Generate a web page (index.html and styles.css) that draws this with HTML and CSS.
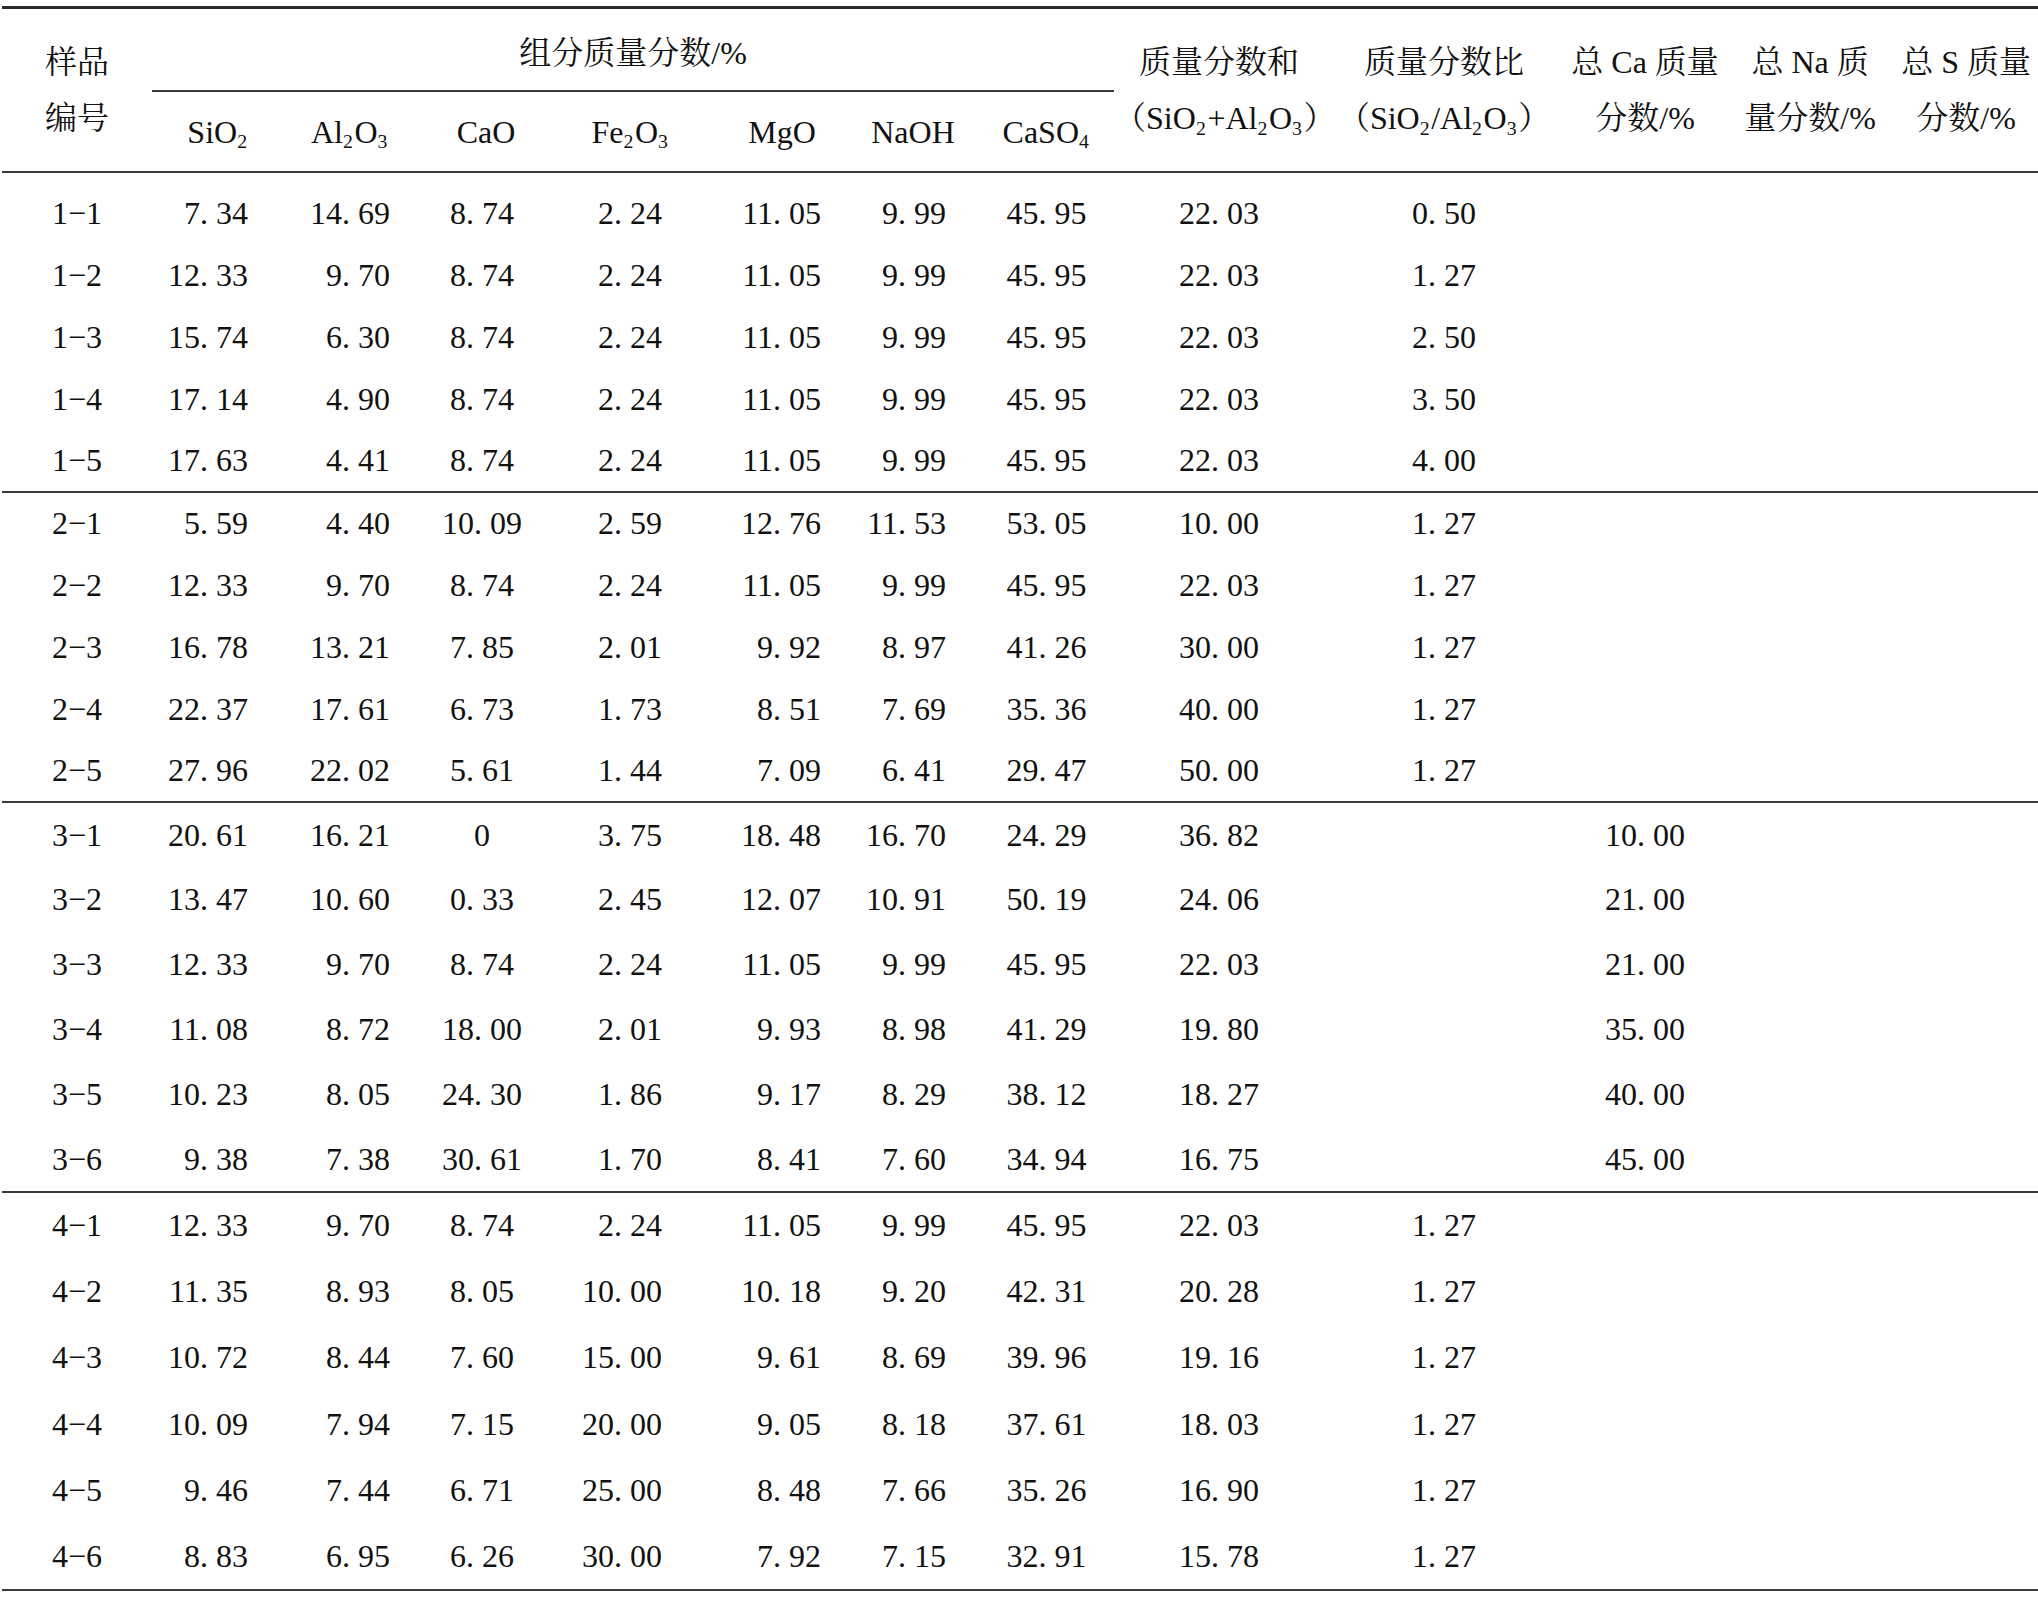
FILE: index.html
```html
<!DOCTYPE html>
<html lang="zh-CN">
<head>
<meta charset="utf-8">
<title>样品组分质量分数</title>
<link rel="stylesheet" href="styles.css">
</head>
<body>
<table class="data">
  <colgroup>
    <col class="c-id"><col class="c-si"><col class="c-al"><col class="c-ca"><col class="c-fe"><col class="c-mg"><col class="c-na"><col class="c-cs"><col class="c-sum"><col class="c-ratio"><col class="c-tca"><col class="c-tna"><col class="c-ts">
  </colgroup>
  <thead>
    <tr class="h1">
      <th rowspan="2" class="two">样品<br>编号</th>
      <th colspan="7" class="group">组分质量分数/%</th>
      <th rowspan="2" class="two">质量分数和<br>（SiO<sub>2</sub>+Al<sub>2</sub>O<sub>3</sub>）</th>
      <th rowspan="2" class="two">质量分数比<br>（SiO<sub>2</sub>/Al<sub>2</sub>O<sub>3</sub>）</th>
      <th rowspan="2" class="two">总 Ca 质量<br>分数/%</th>
      <th rowspan="2" class="two">总 Na 质<br>量分数/%</th>
      <th rowspan="2" class="two">总 S 质量<br>分数/%</th>
    </tr>
    <tr class="h2">
      <th>SiO<sub>2</sub></th>
      <th>Al<sub>2</sub>O<sub>3</sub></th>
      <th>CaO</th>
      <th>Fe<sub>2</sub>O<sub>3</sub></th>
      <th class="mg">MgO</th>
      <th>NaOH</th>
      <th>CaSO<sub>4</sub></th>
    </tr>
  </thead>
  <tbody class="g1">
    <tr><td>1−1</td><td>7. 34</td><td>14. 69</td><td>8. 74</td><td>2. 24</td><td>11. 05</td><td>9. 99</td><td>45. 95</td><td>22. 03</td><td>0. 50</td><td></td><td></td><td></td></tr>
    <tr><td>1−2</td><td>12. 33</td><td>9. 70</td><td>8. 74</td><td>2. 24</td><td>11. 05</td><td>9. 99</td><td>45. 95</td><td>22. 03</td><td>1. 27</td><td></td><td></td><td></td></tr>
    <tr><td>1−3</td><td>15. 74</td><td>6. 30</td><td>8. 74</td><td>2. 24</td><td>11. 05</td><td>9. 99</td><td>45. 95</td><td>22. 03</td><td>2. 50</td><td></td><td></td><td></td></tr>
    <tr><td>1−4</td><td>17. 14</td><td>4. 90</td><td>8. 74</td><td>2. 24</td><td>11. 05</td><td>9. 99</td><td>45. 95</td><td>22. 03</td><td>3. 50</td><td></td><td></td><td></td></tr>
    <tr><td>1−5</td><td>17. 63</td><td>4. 41</td><td>8. 74</td><td>2. 24</td><td>11. 05</td><td>9. 99</td><td>45. 95</td><td>22. 03</td><td>4. 00</td><td></td><td></td><td></td></tr>
  </tbody>
  <tbody class="g2">
    <tr><td>2−1</td><td>5. 59</td><td>4. 40</td><td>10. 09</td><td>2. 59</td><td>12. 76</td><td>11. 53</td><td>53. 05</td><td>10. 00</td><td>1. 27</td><td></td><td></td><td></td></tr>
    <tr><td>2−2</td><td>12. 33</td><td>9. 70</td><td>8. 74</td><td>2. 24</td><td>11. 05</td><td>9. 99</td><td>45. 95</td><td>22. 03</td><td>1. 27</td><td></td><td></td><td></td></tr>
    <tr><td>2−3</td><td>16. 78</td><td>13. 21</td><td>7. 85</td><td>2. 01</td><td>9. 92</td><td>8. 97</td><td>41. 26</td><td>30. 00</td><td>1. 27</td><td></td><td></td><td></td></tr>
    <tr><td>2−4</td><td>22. 37</td><td>17. 61</td><td>6. 73</td><td>1. 73</td><td>8. 51</td><td>7. 69</td><td>35. 36</td><td>40. 00</td><td>1. 27</td><td></td><td></td><td></td></tr>
    <tr><td>2−5</td><td>27. 96</td><td>22. 02</td><td>5. 61</td><td>1. 44</td><td>7. 09</td><td>6. 41</td><td>29. 47</td><td>50. 00</td><td>1. 27</td><td></td><td></td><td></td></tr>
  </tbody>
  <tbody class="g3">
    <tr><td>3−1</td><td>20. 61</td><td>16. 21</td><td>0</td><td>3. 75</td><td>18. 48</td><td>16. 70</td><td>24. 29</td><td>36. 82</td><td></td><td>10. 00</td><td></td><td></td></tr>
    <tr><td>3−2</td><td>13. 47</td><td>10. 60</td><td>0. 33</td><td>2. 45</td><td>12. 07</td><td>10. 91</td><td>50. 19</td><td>24. 06</td><td></td><td>21. 00</td><td></td><td></td></tr>
    <tr><td>3−3</td><td>12. 33</td><td>9. 70</td><td>8. 74</td><td>2. 24</td><td>11. 05</td><td>9. 99</td><td>45. 95</td><td>22. 03</td><td></td><td>21. 00</td><td></td><td></td></tr>
    <tr><td>3−4</td><td>11. 08</td><td>8. 72</td><td>18. 00</td><td>2. 01</td><td>9. 93</td><td>8. 98</td><td>41. 29</td><td>19. 80</td><td></td><td>35. 00</td><td></td><td></td></tr>
    <tr><td>3−5</td><td>10. 23</td><td>8. 05</td><td>24. 30</td><td>1. 86</td><td>9. 17</td><td>8. 29</td><td>38. 12</td><td>18. 27</td><td></td><td>40. 00</td><td></td><td></td></tr>
    <tr><td>3−6</td><td>9. 38</td><td>7. 38</td><td>30. 61</td><td>1. 70</td><td>8. 41</td><td>7. 60</td><td>34. 94</td><td>16. 75</td><td></td><td>45. 00</td><td></td><td></td></tr>
  </tbody>
  <tbody class="g4">
    <tr><td>4−1</td><td>12. 33</td><td>9. 70</td><td>8. 74</td><td>2. 24</td><td>11. 05</td><td>9. 99</td><td>45. 95</td><td>22. 03</td><td>1. 27</td><td></td><td></td><td></td></tr>
    <tr><td>4−2</td><td>11. 35</td><td>8. 93</td><td>8. 05</td><td>10. 00</td><td>10. 18</td><td>9. 20</td><td>42. 31</td><td>20. 28</td><td>1. 27</td><td></td><td></td><td></td></tr>
    <tr><td>4−3</td><td>10. 72</td><td>8. 44</td><td>7. 60</td><td>15. 00</td><td>9. 61</td><td>8. 69</td><td>39. 96</td><td>19. 16</td><td>1. 27</td><td></td><td></td><td></td></tr>
    <tr><td>4−4</td><td>10. 09</td><td>7. 94</td><td>7. 15</td><td>20. 00</td><td>9. 05</td><td>8. 18</td><td>37. 61</td><td>18. 03</td><td>1. 27</td><td></td><td></td><td></td></tr>
    <tr><td>4−5</td><td>9. 46</td><td>7. 44</td><td>6. 71</td><td>25. 00</td><td>8. 48</td><td>7. 66</td><td>35. 26</td><td>16. 90</td><td>1. 27</td><td></td><td></td><td></td></tr>
    <tr><td>4−6</td><td>8. 83</td><td>6. 95</td><td>6. 26</td><td>30. 00</td><td>7. 92</td><td>7. 15</td><td>32. 91</td><td>15. 78</td><td>1. 27</td><td></td><td></td><td></td></tr>
  </tbody>
</table>
</body>
</html>
```

FILE: styles.css
```css
html, body {
  margin: 0;
  padding: 0;
  background: #ffffff;
}

body {
  font-family: "Liberation Serif", "Noto Serif CJK SC", "Noto Sans CJK SC", serif;
  font-size: 32px;
  color: #111111;
}

.data {
  border-collapse: collapse;
  table-layout: fixed;
  width: 2036px;
  margin: 6px 0 0 2px;
}

.c-id { width: 150px; }
.c-si { width: 132px; }
.c-al { width: 132px; }
.c-ca { width: 140px; }
.c-fe { width: 149px; }
.c-mg { width: 142px; }
.c-na { width: 132px; }
.c-cs { width: 135px; }
.c-sum { width: 210px; }
.c-ratio { width: 240px; }
.c-tca { width: 162px; }
.c-tna { width: 168px; }
.c-ts { width: 144px; }

th, td {
  padding: 0;
  font-weight: 400;
  white-space: nowrap;
  text-align: center;
  vertical-align: middle;
  line-height: 1;
  overflow: visible;
}

sub {
  font-size: 0.62em;
  vertical-align: -0.3em;
  line-height: 0;
  margin-right: 0.08em;
}

thead th {
  border-bottom: 2px solid #3a3a3a;
}

thead .h1 th {
  border-top: 3px solid #2a2a2a;
  height: 75px;
}

thead .h2 th {
  height: 79px;
}

.two {
  line-height: 56px;
}

.group {
  padding-top: 6px;
}

.mg {
  padding-left: 12px;
}

tbody {
  border-bottom: 2px solid #3a3a3a;
}

tbody tr {
  height: 62px;
}

.g1 tr:first-child {
  height: 71.5px;
}

.g1 tr:first-child td {
  padding-top: 10px;
}

.g3 tr {
  height: 65px;
}

.g4 tr {
  height: 66.4px;
}

tbody td:nth-child(2) { text-align: right; padding-right: 36px; }
tbody td:nth-child(3) { text-align: right; padding-right: 26px; }
tbody td:nth-child(4) { padding-right: 8px; }
tbody td:nth-child(5) { text-align: right; padding-right: 43px; }
tbody td:nth-child(6) { text-align: right; padding-right: 26px; }
tbody td:nth-child(7) { text-align: right; padding-right: 33px; }
```
